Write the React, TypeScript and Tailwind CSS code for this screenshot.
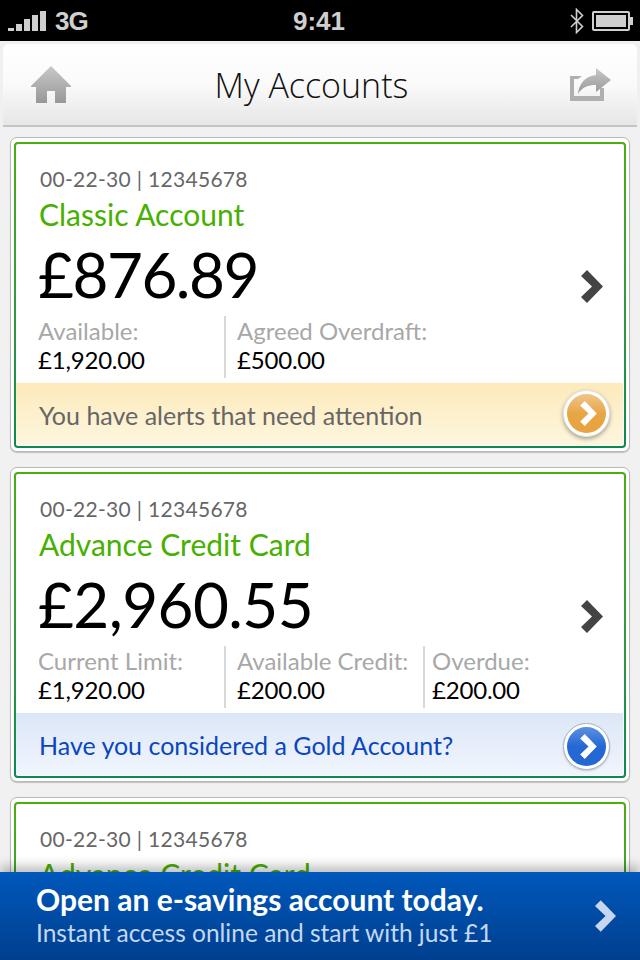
import React from 'react';

const font = { fontFamily: 'Lato, "Open Sans", sans-serif' };

function Chevron({ className, color }: { className?: string; color: string }) {
  return (
    <svg viewBox="0 0 22 33" className={className}>
      <polygon points="0,6 6,0 22,16.5 6,33 0,27 11,16.5" fill={color} />
    </svg>
  );
}

function StatusBar() {
  return (
    <div className="flex h-[41px] items-center justify-between bg-black pl-[8px] pr-[7px] text-[#cfcfcf]">
      <div className="flex w-[118px] items-center gap-[9px]">
        <div className="flex items-end gap-[2px]">
          <div className="h-[3px] w-[6px] bg-[#cfcfcf]" />
          <div className="h-[7px] w-[6px] bg-[#cfcfcf]" />
          <div className="h-[12px] w-[6px] bg-[#cfcfcf]" />
          <div className="h-[16px] w-[6px] bg-[#cfcfcf]" />
          <div className="h-[20px] w-[6px] bg-[#cfcfcf]" />
        </div>
        <span className="text-[26px] font-bold leading-none tracking-[-1px]" style={{ fontFamily: '"Liberation Sans", sans-serif' }}>3G</span>
      </div>
      <span className="text-[26px] font-bold leading-none" style={{ fontFamily: '"Liberation Sans", sans-serif' }}>9:41</span>
      <div className="flex w-[121px] items-center justify-end gap-[8px]">
        <svg viewBox="0 0 14 26" className="h-[26px] w-[14px]">
          <path d="M1 7 L12.5 18.5 L6.5 24.5 V1.5 L12.5 7.5 L1 19" fill="none" stroke="#cfcfcf" strokeWidth="1.6" />
        </svg>
        <div className="flex items-center">
          <div className="flex h-[20px] w-[38px] items-center rounded-[2px] border-2 border-[#cfcfcf] p-[2px]">
            <div className="h-full w-full bg-[#cfcfcf]" />
          </div>
          <div className="h-[8px] w-[3px] bg-[#cfcfcf]" />
        </div>
      </div>
    </div>
  );
}

function NavBar() {
  return (
    <div className="bg-[#f0f0f0] px-[3px] pt-[3px]">
      <div className="flex h-[83px] items-center justify-between rounded-t-[6px] border-b-2 border-[#c4c4c4] bg-gradient-to-b from-white via-[#fafafa] to-[#e6e6e6] pl-[28px] pr-[25px]">
        <svg viewBox="0 0 40 38" className="h-[38px] w-[40px]">
          <defs>
            <linearGradient id="grey" x1="0" y1="0" x2="0" y2="1">
              <stop offset="0" stopColor="#c8c8c8" />
              <stop offset="1" stopColor="#989898" />
            </linearGradient>
          </defs>
          <path d="M20 0 L40 20 L40 21 L35 21 L35 37 L24 37 L24 25 L16 25 L16 37 L5 37 L5 21 L0 21 L0 20 Z" fill="url(#grey)" />
        </svg>
        <span className="mr-[18px] text-[34px] leading-none text-[#111]" style={{ fontFamily: '"Open Sans", sans-serif', fontWeight: 300 }}>My Accounts</span>
        <svg viewBox="0 0 42 34" className="h-[34px] w-[42px]">
          <path d="M0 8 H12 L8 11 H4 V28 H30 V20 H34 V33 H0 Z" fill="#b0b0b0" />
          <path d="M26 0 L41 12 L26 24 V17 C18 17 12 19 8 26 C9 15 16 8 26 7 Z" fill="url(#grey)" />
        </svg>
      </div>
    </div>
  );
}

type Stat = { label: string; value: string; width: string };

type Account = {
  name: string;
  balance: string;
  balanceClass: string;
  stats: Stat[];
  message: string;
  tone: 'alert' | 'promo';
};

function RoundButton({ tone }: { tone: 'alert' | 'promo' }) {
  const alert = tone === 'alert';
  return (
    <div
      className={
        'flex h-[47px] w-[47px] items-center justify-center rounded-full bg-white ' +
        (alert
          ? '-translate-y-[1px] border border-[#e4e4e4] shadow-[0_2px_4px_rgba(0,0,0,0.35)]'
          : 'translate-y-[2px] border border-[#a8b4c4] shadow-[0_1px_2px_rgba(0,0,0,0.2)]')
      }
    >
      <div className={'flex h-[39px] w-[39px] items-center justify-center rounded-full bg-gradient-to-b ' + (alert ? 'from-[#efc588] via-[#e8a544] via-50% to-[#e8a33f]' : 'from-[#5b90e0] via-[#2468d4] via-50% to-[#2468d4]')}>
        <Chevron className="ml-[3px] h-[25px] w-[17px]" color="#ffffff" />
      </div>
    </div>
  );
}

function AccountCard({ account }: { account: Account }) {
  const alert = account.tone === 'alert';
  return (
    <div className="rounded-[7px] border border-[#b8b8b8] bg-white px-[3px] pb-[3px] pt-[4px] shadow-[0_1px_1px_rgba(0,0,0,0.2)]">
      <div className="rounded-[4px] bg-gradient-to-b from-[#4cae0a] to-[#0a8a50] p-[2px]">
        <div className="rounded-[2px] bg-white pb-[1px] pr-[1px]">
          <div className="relative h-[239px] pl-[22px] pt-[20px]">
            <div className="ml-[2px] text-[21px] leading-[30px] tracking-[0.3px] text-[#666]">
              00-22-30 | 12345678
            </div>
            <div className="ml-[1px] text-[30px] leading-[40px] text-[#47b000]">{account.name}</div>
            <div className={'h-[80px] text-[62px] leading-[80px] text-black ' + account.balanceClass}>{account.balance}</div>
            <div className="flex pt-[2px]">
              {account.stats.map((s, i) => (
                <div key={s.label} className={s.width + ' h-[62px] ' + (i > 0 ? 'border-l-2 border-[#d8d8d8] ' + (i === 1 ? 'pl-[11px]' : 'pl-[7px]') : '')}>
                  <div className="text-[24px] leading-[29px] text-[#a8a8a8]">{s.label}</div>
                  <div className="text-[24px] leading-[30px] tracking-[-0.2px] text-black">{s.value}</div>
                </div>
              ))}
            </div>
            <div className="absolute right-[20px] top-[126px]">
              <Chevron className="h-[33px] w-[22px]" color="#444444" />
            </div>
          </div>
          <div className={'flex h-[62px] items-center justify-between pl-[23px] pr-[13px] bg-gradient-to-b ' + (alert ? 'from-[#fdeabb] to-[#fdf6de] text-[#666]' : 'from-[#dce7f7] to-[#f0f5fd] text-[#0a46c0]')}>
            <span className="mt-[3px] text-[25px] leading-none">{account.message}</span>
            <RoundButton tone={account.tone} />
          </div>
        </div>
      </div>
    </div>
  );
}

const accounts: Account[] = [
  {
    name: 'Classic Account',
    balance: '£876.89',
    balanceClass: 'tracking-[-1.5px]',
    stats: [
      { label: 'Available:', value: '£1,920.00', width: 'w-[186px]' },
      { label: 'Agreed Overdraft:', value: '£500.00', width: 'w-[300px]' },
    ],
    message: 'You have alerts that need attention',
    tone: 'alert',
  },
  {
    name: 'Advance Credit Card',
    balance: '£2,960.55',
    balanceClass: 'tracking-[-0.6px]',
    stats: [
      { label: 'Current Limit:', value: '£1,920.00', width: 'w-[186px]' },
      { label: 'Available Credit:', value: '£200.00', width: 'w-[199px]' },
      { label: 'Overdue:', value: '£200.00', width: 'w-[190px]' },
    ],
    message: 'Have you considered a Gold Account?',
    tone: 'promo',
  },
  {
    name: 'Advance Credit Card',
    balance: '£2,960.55',
    balanceClass: 'tracking-[-0.6px]',
    stats: [
      { label: 'Current Limit:', value: '£1,920.00', width: 'w-[186px]' },
      { label: 'Available Credit:', value: '£200.00', width: 'w-[199px]' },
      { label: 'Overdue:', value: '£200.00', width: 'w-[190px]' },
    ],
    message: 'Have you considered a Gold Account?',
    tone: 'promo',
  },
];

export default function App() {
  return (
    <div className="relative h-[960px] w-[640px] overflow-hidden bg-[#f1f1f1]" style={font}>
      <StatusBar />
      <NavBar />
      <div className="flex flex-col gap-[15px] pl-[10px] pr-[10px] pt-[10px]">
        {accounts.map((a, i) => (
          <AccountCard key={i} account={a} />
        ))}
      </div>
      <div className="absolute bottom-0 left-0 right-0 flex h-[88px] items-center justify-between bg-gradient-to-b from-[#0058bb] to-[#003f8f] pl-[36px] pr-[24px] shadow-[0_-6px_10px_rgba(0,0,0,0.25)]">
        <div className="-mt-[2px]">
          <div className="text-[30px] font-bold leading-[34px] text-white">Open an e-savings account today.</div>
          <div className="mt-[1px] text-[24.5px] leading-[32px] text-[#c5d8f2]">Instant access online and start with just £1</div>
        </div>
        <Chevron className="h-[32px] w-[21px]" color="#c5d6ee" />
      </div>
    </div>
  );
}
